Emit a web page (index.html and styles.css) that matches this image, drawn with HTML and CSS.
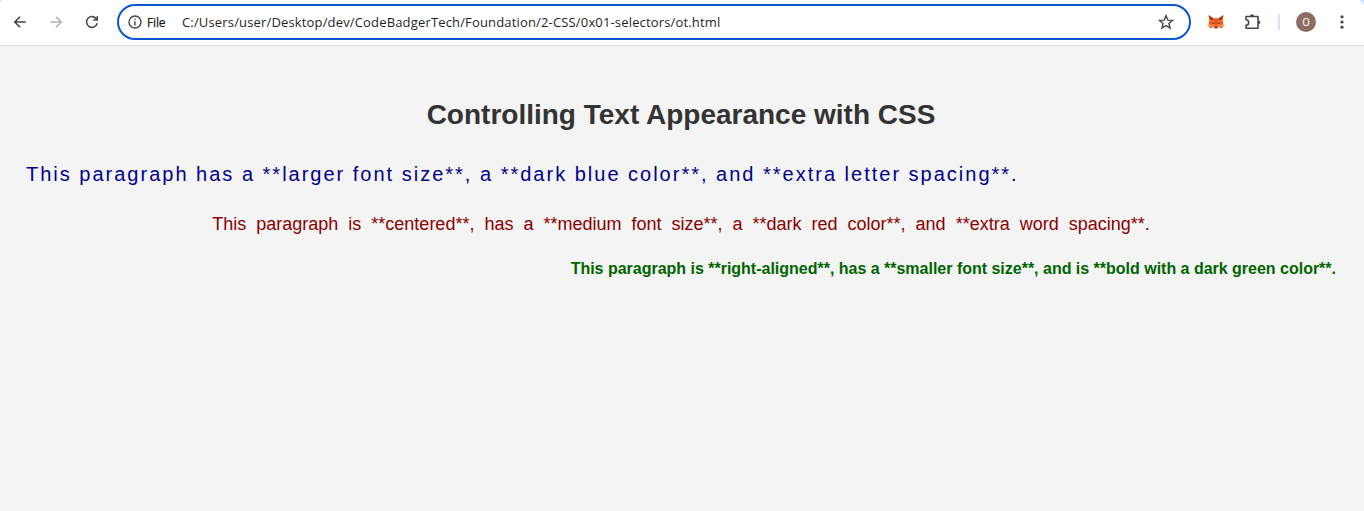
FILE: index.html
```
<!DOCTYPE html>
<html lang="en">
<head>
<meta charset="utf-8">
<title>Controlling Text Appearance with CSS</title>
<link rel="stylesheet" href="styles.css">
</head>
<body>
<header class="toolbar">
  <nav class="nav">
    <svg class="icon" viewBox="0 0 16 16"><path d="M13.8 8H3M8 2.8 2.8 8 8 13.2" /></svg>
    <svg class="icon icon-disabled" viewBox="0 0 16 16"><path d="M2.2 8H13M8 2.8 13.2 8 8 13.2" /></svg>
    <svg class="icon" viewBox="0 0 16 16"><path d="M12.6 5.2A5.4 5.4 0 1 0 13.2 9.2M13.2 2.2V6H9.2" /></svg>
  </nav>
  <div class="omnibox">
    <svg class="info" viewBox="0 0 14 14"><circle cx="7" cy="7" r="6"/><path d="M7 6.2V10.4M7 3.7V5.1"/></svg>
    <span class="scheme">File</span>
    <span class="url">C:/Users/user/Desktop/dev/CodeBadgerTech/Foundation/2-CSS/0x01-selectors/ot.html</span>
    <svg class="star" viewBox="0 0 16 16"><path d="M8 1.6 9.8 6.1 14.5 6.4 10.9 9.5 12.1 14.1 8 11.6 3.9 14.1 5.1 9.5 1.5 6.4 6.2 6.1Z"/></svg>
  </div>
  <div class="actions">
    <svg class="fox" viewBox="0 0 16 16">
      <path fill="#ff7a3c" d="M.6 1 6 4.4H10L15.4 1 14.9 7.6 15.6 11 14.4 14.4 10.6 13.6 9.5 14.6H6.5L5.4 13.6 1.6 14.4.4 11 1.1 7.6Z"/>
      <path fill="#963710" d="M.8 1.2 5.4 4.4 5 6.6 2 5.4ZM15.2 1.2 10.6 4.4 11 6.6 14 5.4Z"/>
      <path fill="#e8551a" d="M5.6 4.6H10.4L9.6 11H6.4ZM1.2 7.8 4.8 7 4.2 9 .8 10.6ZM14.8 7.8 11.2 7 11.8 9 15.2 10.6Z"/>
      <path fill="#28363f" d="M4 8.4 6.2 9 6 10.2 4.5 9.6ZM12 8.4 9.8 9 10 10.2 11.5 9.6ZM6.5 12.4H9.5V14H6.5Z"/>
      <path fill="#dfd5d0" d="M5.4 13.2H6.6L7 14.5H9L9.4 13.2H10.6L9.6 15.4H6.4Z"/>
    </svg>
    <svg class="puzzle" viewBox="0 0 18 18"><path d="M2 3.5H14V15.3H2V12.2C5.6 12.2 5.6 6.7 2 6.7Z"/><path class="solid" d="M6 3.2A2 2 0 0 1 10 3.2ZM14.3 7.2A2 2 0 0 1 14.3 11.2Z"/></svg>
    <span class="divider"></span>
    <span class="avatar">O</span>
    <svg class="menu" viewBox="0 0 4 16"><circle cx="2" cy="2.8" r="1.6"/><circle cx="2" cy="8" r="1.6"/><circle cx="2" cy="13.2" r="1.6"/></svg>
  </div>
</header>
<main class="page">
  <h1 class="title">Controlling Text Appearance with CSS</h1>
  <p class="large">This paragraph has a **larger font size**, a **dark blue color**, and **extra letter spacing**.</p>
  <p class="medium">This paragraph is **centered**, has a **medium font size**, a **dark red color**, and **extra word spacing**.</p>
  <p class="small">This paragraph is **right-aligned**, has a **smaller font size**, and is **bold with a dark green color**.</p>
</main>
</body>
</html>
```
FILE: styles.css
```
* { box-sizing: border-box; }
body { margin: 0; height: 511px; overflow: hidden; background: #f4f4f4; font-family: "Liberation Sans", Arial, sans-serif; }
.toolbar { display: flex; align-items: center; height: 46px; padding-bottom: 1px; background: linear-gradient(225deg, #d3e3fd 3px, transparent 4px), linear-gradient(135deg, #d3e3fd 1px, #fff 2px); border-bottom: 1px solid #e0e0e0; font-family: "Open Sans", "Noto Sans", sans-serif; }
.nav { display: flex; gap: 20px; width: 117px; padding-left: 12px; }
.icon { width: 16px; height: 16px; fill: none; stroke: #474747; stroke-width: 1.6; }
.icon-disabled { stroke: #b3b3b3; }
.omnibox { display: flex; align-items: center; width: 1074px; height: 36px; padding: 0 15px 0 9px; border: 2px solid #0b57d0; border-radius: 18px; background: #fff; color: #1f1f1f; }
.info { width: 14px; height: 14px; fill: none; stroke: #474747; stroke-width: 1.4; }
.scheme { width: 35px; margin-left: 5px; font-size: 12px; letter-spacing: -.15px; font-weight: 500; -webkit-text-stroke: .25px #1f1f1f; }
.url { flex: 1; font-size: 13px; letter-spacing: .16px; white-space: nowrap; }
.star { width: 16px; height: 16px; fill: none; stroke: #474747; stroke-width: 1.4; }
.actions { display: flex; align-items: center; padding-left: 17px; }
.fox { width: 16px; height: 16px; }
.puzzle { width: 18px; height: 18px; margin-left: 20px; fill: none; stroke: #474747; stroke-width: 1.6; stroke-linejoin: round; }
.puzzle .solid { fill: #474747; stroke: none; }
.divider { width: 2px; height: 16px; margin-left: 16px; background: #d3e3fd; }
.avatar { display: flex; align-items: center; justify-content: center; width: 20px; height: 20px; margin-left: 16px; border-radius: 50%; background: #8d6e63; color: #fff; font: 11px Roboto, sans-serif; }
.menu { width: 4px; height: 16px; margin-left: 24px; fill: #474747; }
.page { padding: 52px 28px 0 26px; }
.title { margin: 0; font-size: 28px; line-height: 34px; text-align: center; color: #333; }
.large { margin: 30px 0 0; font-size: 20px; line-height: 24px; letter-spacing: 2px; color: #00008b; }
.medium { margin: 27px 0 0; font-size: 18px; line-height: 22px; word-spacing: 5px; text-align: center; color: #8b0000; }
.small { margin: 24px 0 0; font-size: 16px; line-height: 20px; font-weight: bold; letter-spacing: -.01px; text-align: right; color: #006400; }
```
